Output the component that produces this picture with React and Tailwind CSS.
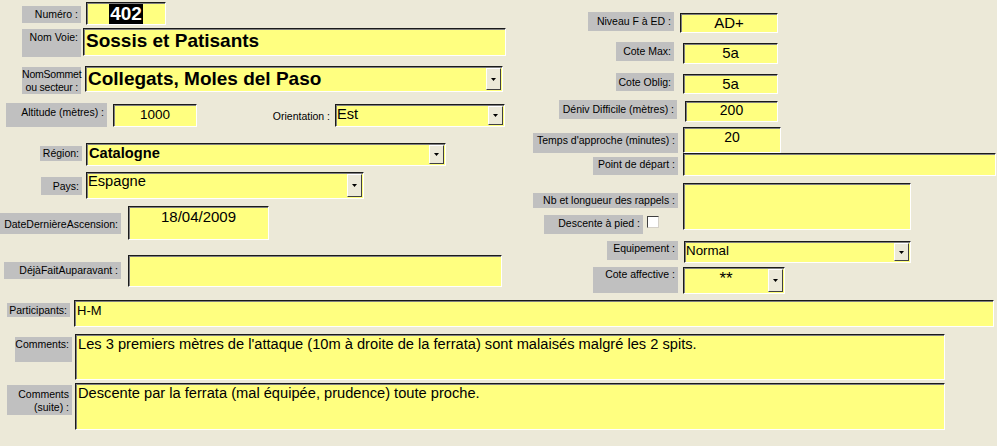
import React from "react";

// Access-style form: grey labels, sunken yellow text boxes
const Label = ({ className = "", children }) => (
  <div
    className={`bg-[#c0c0c0] text-right whitespace-nowrap pr-[3px] pt-[1px] text-[10.5px] leading-[13px] text-black shrink-0 ${className}`}
  >
    {children}
  </div>
);

const Field = ({ className = "", children }) => (
  <div
    className={`bg-[#ffff80] border border-t-[#1a1a1a] border-l-[#1a1a1a] border-r-white border-b-white shadow-[inset_1px_1px_0_#808080] text-black shrink-0 overflow-hidden ${className}`}
  >
    {children}
  </div>
);

const DropButton = () => (
  <div className="w-[15px] shrink-0 self-stretch my-[1px] mr-[1px] bg-[#ece9d8] border border-t-white border-l-white border-r-[#404040] border-b-[#404040] flex items-center justify-center">
    <svg width="5" height="3" viewBox="0 0 5 3">
      <path d="M0 0h5L2.5 3z" fill="#000" />
    </svg>
  </div>
);

const Combo = ({ className = "", textClass = "", children }) => (
  <Field className={`flex ${className}`}>
    <div className={`flex-1 min-w-0 whitespace-nowrap ${textClass}`}>{children}</div>
    <DropButton />
  </Field>
);

export default function App() {
  return (
    <div className="w-[997px] h-[446px] bg-[#ece9d8] overflow-hidden font-['Liberation_Sans',Arial,sans-serif]">
      {/* top part: two columns */}
      <div className="flex h-[300px]">
        {/* left column */}
        <div className="w-[520px] shrink-0 pt-[2px]">
          <div className="flex items-start h-[26px]">
            <Label className="ml-[22px] w-[59px] mt-[4px] h-[17px] pt-[2px]">Numéro :</Label>
            <Field className="ml-[5px] w-[80px] h-[23px] flex justify-center items-center">
              <span className="bg-black text-white font-bold text-[19px] leading-[20px] px-[1px]">402</span>
            </Field>
          </div>
          <div className="flex items-start h-[38px]">
            <Label className="ml-[22px] w-[59px] mt-[1px] h-[28px] pt-[2px]">Nom Voie:</Label>
            <Field className="ml-[2px] w-[423px] h-[28px] pl-[2px] pt-[1px] font-bold text-[19px] leading-[22px]">
              Sossis et Patisants
            </Field>
          </div>
          <div className="flex items-start h-[37px]">
            <Label className="ml-[22px] w-[59px] mt-[1px] h-[27px] leading-[12px] pr-[2px] tracking-[-0.2px]">
              NomSommet
              <br />
              ou secteur :
            </Label>
            <Combo
              className="ml-[4px] w-[418px] h-[26px]"
              textClass="pl-[2px] pt-[1px] font-bold text-[19px] leading-[22px]"
            >
              Collegats, Moles del Paso
            </Combo>
          </div>
          <div className="flex items-start h-[40px]">
            <Label className="ml-[6px] w-[101px] h-[24px] pt-[3px]">Altitude (mètres) :</Label>
            <Field className="ml-[6px] w-[84px] h-[23px] mt-[1px] text-center text-[13.5px] leading-[16px] pt-[2px]">
              1000
            </Field>
            <div className="w-[133px] text-right text-[10.5px] leading-[13px] mt-[7px] shrink-0">Orientation :</div>
            <Combo
              className="ml-[5px] w-[170px] h-[23px] mt-[1px]"
              textClass="pl-[1px] pt-[1px] text-[14.67px] leading-[17px]"
            >
              Est
            </Combo>
          </div>
          <div className="flex items-start h-[29px]">
            <Label className="ml-[40px] w-[42px] mt-[3px] h-[15px]">Région:</Label>
            <Combo
              className="ml-[4px] w-[360px] h-[23px]"
              textClass="pl-[2px] pt-[1px] font-bold text-[14.67px] leading-[17px]"
            >
              Catalogne
            </Combo>
          </div>
          <div className="flex items-start h-[34px]">
            <Label className="ml-[41px] w-[41px] mt-[5px] h-[18px] pt-[3px]">Pays:</Label>
            <Combo
              className="ml-[4px] w-[278px] h-[27px]"
              textClass="pl-[1px] text-[14.67px] leading-[17px]"
            >
              Espagne
            </Combo>
          </div>
          <div className="flex items-start h-[49px]">
            <Label className="ml-0 w-[121px] mt-[7px] h-[21px] pt-[5px] pr-[2px]">DateDernièreAscension:</Label>
            <Field className="ml-[7px] w-[141px] h-[34px] text-center text-[15px] leading-[17px] pt-[1px]">
              18/04/2009
            </Field>
          </div>
          <div className="flex items-start h-[32px]">
            <Label className="ml-[4px] w-[117px] mt-[7px] h-[17px] pt-[2px]">DéjàFaitAuparavant :</Label>
            <Field className="ml-[7px] w-[374px] h-[32px]" />
          </div>
        </div>

        {/* right column */}
        <div className="flex-1 pt-[12px]">
          <div className="flex items-start h-[30px]">
            <Label className="ml-[68px] w-[86px] h-[19px] pt-[3px]">Niveau F à ED :</Label>
            <Field className="ml-[6px] w-[98px] h-[20px] mt-[1px] text-center text-[15px] leading-[17px]">AD+</Field>
          </div>
          <div className="flex items-start h-[31px]">
            <Label className="ml-[96px] w-[58px] h-[19px] pt-[3px]">Cote Max:</Label>
            <Field className="ml-[9px] w-[95px] h-[21px] mt-[1px] text-center text-[15px] leading-[17px]">5a</Field>
          </div>
          <div className="flex items-start h-[27px]">
            <Label className="ml-[96px] w-[58px] h-[18px] pt-[3px]">Cote Oblig:</Label>
            <Field className="ml-[9px] w-[95px] h-[20px] mt-[1px] text-center text-[15px] leading-[17px]">5a</Field>
          </div>
          <div className="flex items-start h-[27px]">
            <Label className="ml-[39px] w-[118px] h-[19px] pt-[3px]">Déniv Difficile (mètres) :</Label>
            <Field className="ml-[8px] w-[93px] h-[21px] mt-[1px] text-center text-[14px] leading-[17px]">200</Field>
          </div>
          <div className="flex items-start h-[26px]">
            <Label className="ml-[13px] w-[145px] mt-[6px] h-[20px] pt-[1px] pr-[2px]">Temps d'approche (minutes) :</Label>
            <Field className="ml-[5px] w-[98px] h-[26px] text-center text-[14px] leading-[17px] pt-[1px]">20</Field>
          </div>
          <div className="flex items-start h-[30px]">
            <Label className="ml-[73px] w-[85px] mt-[4px] h-[18px] pt-[1px]">Point de départ :</Label>
            <Field className="ml-[5px] w-[313px] h-[23px]" />
          </div>
          <div className="flex items-start h-[58px]">
            <div className="ml-[13px] w-[150px] shrink-0">
              <Label className="w-[145px] mt-[10px] h-[15px]">Nb et longueur des rappels :</Label>
              <div className="flex items-start mt-[7px]">
                <Label className="ml-[11px] w-[99px] h-[19px] pt-[2px]">Descente à pied :</Label>
                <div className="ml-[4px] mt-[1px] w-[12px] h-[12px] bg-white border border-t-[#404040] border-l-[#404040] border-r-[#d4d0c8] border-b-[#d4d0c8] shrink-0" />
              </div>
            </div>
            <Field className="w-[228px] h-[47px]" />
          </div>
          <div className="flex items-start h-[26px]">
            <Label className="ml-[87px] w-[71px] h-[19px] pt-[1px]">Equipement :</Label>
            <Combo
              className="ml-[6px] w-[227px] h-[22px]"
              textClass="pl-[1px] pt-[1px] text-[13.33px] leading-[16px]"
            >
              Normal
            </Combo>
          </div>
          <div className="flex items-start h-[27px]">
            <Label className="ml-[73px] w-[85px] h-[26px] pt-[1px]">Cote affective :</Label>
            <Combo
              className="ml-[5px] w-[102px] h-[27px]"
              textClass="text-center text-[17px] leading-[18px] pt-[2px]"
            >
              **
            </Combo>
          </div>
        </div>
      </div>

      {/* bottom part: full-width memo fields */}
      <div className="flex items-start h-[34px]">
        <Label className="ml-[7px] w-[63px] mt-[3px] h-[14px] pt-0 pr-[2px]">Participants:</Label>
        <Field className="ml-[4px] w-[920px] h-[27px] pl-[2px] pt-[2px] text-[13px] leading-[15px]">H-M</Field>
      </div>
      <div className="flex items-start h-[49px]">
        <Label className="ml-[15px] w-[57px] mt-[3px] h-[25px] pr-[2px]">Comments:</Label>
        <Field className="ml-[3px] w-[870px] h-[46px] pl-[2px] pt-[1px] text-[14.67px] leading-[17px]">
          Les 3 premiers mètres de l'attaque (10m à droite de la ferrata) sont malaisés malgré les 2 spits.
        </Field>
      </div>
      <div className="flex items-start h-[63px]">
        <Label className="ml-[7px] w-[65px] mt-[2px] h-[30px] leading-[12px] pt-[3px] pr-[2px]">
          Comments
          <br />
          (suite) :
        </Label>
        <Field className="ml-[3px] w-[870px] h-[47px] pl-[2px] pt-[1px] text-[14.67px] leading-[17px]">
          Descente par la ferrata (mal équipée, prudence) toute proche.
        </Field>
      </div>
    </div>
  );
}
